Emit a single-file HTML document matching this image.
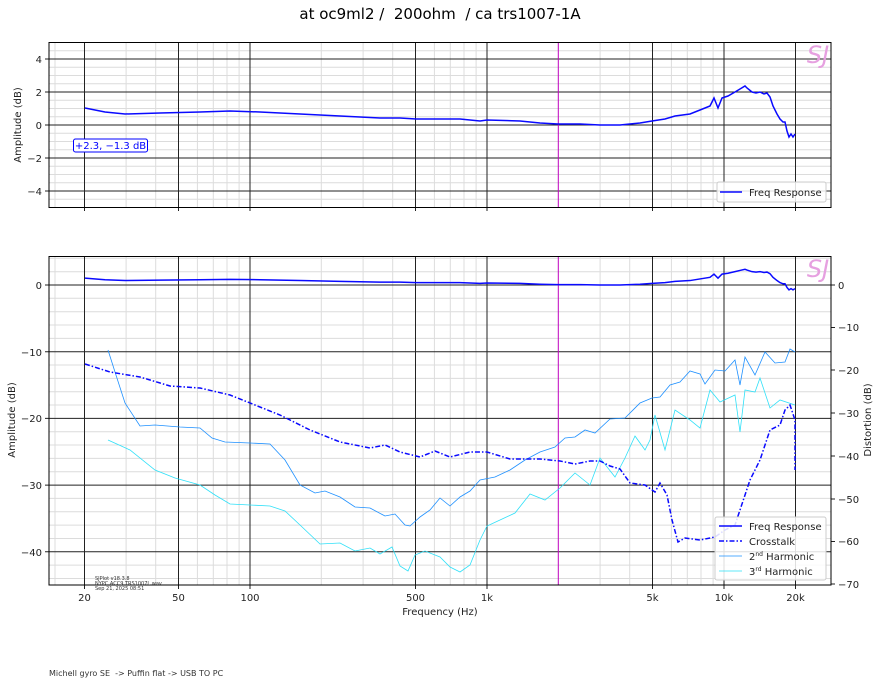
<!DOCTYPE html>
<html><head><meta charset="utf-8"><style>
html,body{margin:0;padding:0;background:#fff;}
svg{display:block;font-family:"DejaVu Sans","Liberation Sans",sans-serif;}
</style></head><body>
<svg width="879" height="685" viewBox="0 0 879 685" xmlns="http://www.w3.org/2000/svg">
<rect width="879" height="685" fill="#fff"/>
<text x="440" y="19" font-size="15" text-anchor="middle" fill="#000" style="white-space:pre">at oc9ml2 /  200ohm  / ca trs1007-1A</text>

<!-- TOP AXES -->
<g stroke="#dcdcdc" stroke-width="1">
<path d="M126.1 42V207M155.7 42V207M197.4 42V207M213.3 42V207M227 42V207M239.1 42V207M321.3 42V207M363.1 42V207M392.7 42V207M434.4 42V207M450.3 42V207M464 42V207M476.1 42V207M600.1 42V207M629.7 42V207M671.4 42V207M687.3 42V207M701 42V207M713.1 42V207M55 42V207"/>
<path d="M49 50.75H831M49 67.25H831M49 75.5H831M49 83.75H831M49 100.25H831M49 108.5H831M49 116.75H831M49 133.25H831M49 141.5H831M49 149.75H831M49 166.25H831M49 174.5H831M49 182.75H831M49 199.25H831"/>
</g>
<g stroke="#222" stroke-width="1">
<path d="M84.5 42V207M178.5 42V207M250 42V207M415.5 42V207M487 42V207M652.5 42V207M724 42V207M795.5 42V207"/>
<path d="M49 59H831M49 92H831M49 125H831M49 158H831M49 191H831"/>
<path d="M84.5 207v4M178.5 207v4M250 207v4M415.5 207v4M487 207v4M652.5 207v4M724 207v4M795.5 207v4M45 59h4M45 92h4M45 125h4M45 158h4M45 191h4"/>
</g>
<line x1="558.3" y1="42" x2="558.3" y2="207" stroke="#c000c0" stroke-width="1"/>
<rect x="49" y="42.5" width="782" height="165" fill="none" stroke="#000" stroke-width="1"/>
<g font-size="10" fill="#222" text-anchor="end">
<text x="42" y="63">4</text><text x="42" y="96">2</text><text x="42" y="129">0</text><text x="42" y="162">−2</text><text x="42" y="195">−4</text>
</g>
<text transform="translate(21 125) rotate(-90)" font-size="10" text-anchor="middle" fill="#222">Amplitude (dB)</text>
<text x="818" y="63" font-size="24" font-style="italic" fill="#e6a0e0" text-anchor="middle">SJ</text>
<rect x="73.5" y="139" width="74" height="13" rx="2" fill="#fff" stroke="#0000ff" stroke-width="1"/>
<text x="110.5" y="149" font-size="10" fill="#0000ff" text-anchor="middle">+2.3, −1.3 dB</text>

<path id="fr" fill="none" stroke="#0a0aff" stroke-width="1.5" vector-effect="non-scaling-stroke" d="M85 108L105 112L125 114L160 113L200 112L230 111L260 112L300 114L340 116L380 118L400 118L416 119L440 119L460 119L480 121L487 120L520 121L540 123L558 124L580 124L600 125L620 125L640 123L652 121L665 119L675 116L690 114L700 110L710 106L714 98L718 108L722 98L728 96L735 92L740 89L745 86L747 88L752 92L756 93L760 92L764 94L767 93L770 97L773 106L777 114L780 119L783 122L785 122L787 131L789 137L791 134L793 137L795 134"/>
<rect x="717" y="182" width="109" height="20" rx="2" fill="#fff" fill-opacity="0.85" stroke="#ccc"/>
<line x1="720" y1="192" x2="742" y2="192" stroke="#0a0aff" stroke-width="1.5"/>
<text x="749" y="196" font-size="10" fill="#222">Freq Response</text>

<!-- BOTTOM AXES -->
<g stroke="#dcdcdc" stroke-width="1">
<path d="M126.1 256V585M155.7 256V585M197.4 256V585M213.3 256V585M227 256V585M239.1 256V585M321.3 256V585M363.1 256V585M392.7 256V585M434.4 256V585M450.3 256V585M464 256V585M476.1 256V585M600.1 256V585M629.7 256V585M671.4 256V585M687.3 256V585M701 256V585M713.1 256V585M55 256V585"/>
<path d="M49 258.3H831M49 271.7H831M49 298.3H831M49 311.7H831M49 325H831M49 338.4H831M49 365H831M49 378.4H831M49 391.7H831M49 405H831M49 431.7H831M49 445H831M49 458.4H831M49 471.8H831M49 498.4H831M49 511.8H831M49 525.1H831M49 538.5H831M49 565.1H831M49 578.5H831"/>
</g>
<g stroke="#222" stroke-width="1">
<path d="M84.5 256V585M178.5 256V585M250 256V585M415.5 256V585M487 256V585M652.5 256V585M724 256V585M795.5 256V585"/>
<path d="M49 285H831M49 351.7H831M49 418.4H831M49 485.1H831M49 551.8H831"/>
<path d="M84.5 585v4M178.5 585v4M250 585v4M415.5 585v4M487 585v4M652.5 585v4M724 585v4M795.5 585v4M45 285h4M45 351.7h4M45 418.4h4M45 485.1h4M45 551.8h4"/>
<path d="M831 285h4M831 327.5h4M831 370h4M831 413h4M831 456h4M831 499h4M831 541.5h4M831 584h4"/>
</g>
<line x1="558.3" y1="256" x2="558.3" y2="585" stroke="#c000c0" stroke-width="1"/>
<rect x="49" y="256.5" width="782" height="328.5" fill="none" stroke="#000" stroke-width="1"/>
<g font-size="10" fill="#222" text-anchor="end">
<text x="42" y="289">0</text><text x="42" y="356">−10</text><text x="42" y="422">−20</text><text x="42" y="489">−30</text><text x="42" y="556">−40</text>
</g>
<g font-size="10" fill="#222" text-anchor="start">
<text x="838" y="289">0</text><text x="838" y="331">−10</text><text x="838" y="374">−20</text><text x="838" y="417">−30</text><text x="838" y="460">−40</text><text x="838" y="503">−50</text><text x="838" y="545">−60</text><text x="838" y="588">−70</text>
</g>
<g font-size="10" fill="#222" text-anchor="middle">
<text x="84.5" y="601">20</text><text x="178.5" y="601">50</text><text x="250" y="601">100</text><text x="415.5" y="601">500</text><text x="487" y="601">1k</text><text x="652.5" y="601">5k</text><text x="724" y="601">10k</text><text x="795.5" y="601">20k</text>
<text x="440" y="615">Frequency (Hz)</text>
</g>
<text transform="translate(15 420) rotate(-90)" font-size="10" text-anchor="middle" fill="#222">Amplitude (dB)</text>
<text transform="translate(871 420) rotate(-90)" font-size="10" text-anchor="middle" fill="#222">Distortion (dB)</text>
<text x="818" y="277" font-size="24" font-style="italic" fill="#e6a0e0" text-anchor="middle">SJ</text>

<use href="#fr" transform="matrix(1,0,0,0.404,0,234.5)"/>

<path fill="none" stroke="#1e90ff" stroke-width="0.8" d="M108 350L115 372L125 403L140 426L155 425L180 427L200 428L212 438L225 442L250 443L270 444L285 460L300 485L315 493L325 491L340 497L355 507L370 508L385 516L395 514L405 525L410 526L420 517L430 510L440 498L450 506L460 497L470 491L480 480L495 477L510 470L525 460L540 452L555 447L565 438L575 437L585 430L595 433L610 419L625 418L640 403L652 398L660 397L670 385L680 382L690 371L700 374L705 384L715 370L725 371L735 360L740 385L745 357L755 375L765 352L775 363L785 362L790 349L795 352"/>
<path fill="none" stroke="#2ee0f8" stroke-width="0.8" d="M108 440L130 450L155 470L175 478L200 485L215 495L230 504L250 505L270 506L285 511L300 525L320 544L340 543L355 551L370 548L380 554L392 547L400 566L408 571L415 555L425 551L440 557L450 567L460 572L470 565L480 540L487 526L500 520L515 513L530 494L545 500L560 488L575 473L590 485L600 458L615 477L625 458L635 436L645 450L650 440L655 415L665 450L675 410L690 420L700 428L710 390L720 402L735 395L740 432L745 390L755 392L760 378L770 408L780 400L795 405"/>
<path fill="none" stroke="#0a0aff" stroke-width="1.5" stroke-dasharray="5,2,1.5,2" d="M85 364L110 372L140 377L170 386L200 388L230 395L255 405L280 415L310 430L340 442L370 448L385 445L400 452L420 457L435 451L450 457L470 452L487 452L510 459L540 459L560 461L575 464L590 461L600 461L610 466L620 469L630 483L645 485L655 492L660 483L667 495L672 520L678 542L685 538L700 540L715 537L725 530L735 525L740 510L750 480L760 460L770 430L780 425L785 410L790 405L795 420L795 470"/>

<rect x="715" y="517" width="111" height="63" rx="2" fill="#fff" fill-opacity="0.85" stroke="#ccc"/>
<line x1="719" y1="526" x2="742" y2="526" stroke="#0a0aff" stroke-width="1.5"/>
<text x="749" y="530" font-size="10" fill="#222">Freq Response</text>
<line x1="719" y1="541" x2="742" y2="541" stroke="#0a0aff" stroke-width="1.5" stroke-dasharray="5,2,1.5,2"/>
<text x="749" y="545" font-size="10" fill="#222">Crosstalk</text>
<line x1="719" y1="556" x2="742" y2="556" stroke="#1e90ff" stroke-width="0.8"/>
<text x="749" y="560" font-size="10" fill="#222">2<tspan font-size="6" dy="-4">nd</tspan><tspan dy="4"> Harmonic</tspan></text>
<line x1="719" y1="571" x2="742" y2="571" stroke="#2ee0f8" stroke-width="0.8"/>
<text x="749" y="575" font-size="10" fill="#222">3<tspan font-size="6" dy="-4">rd</tspan><tspan dy="4"> Harmonic</tspan></text>

<g font-size="5" fill="#333">
<text x="95" y="580">SJPlot v18.3.8</text>
<text x="95" y="585">NYPC ACC9 TRS1007L.wav</text>
<text x="95" y="590">Sep 21, 2025 08:51</text>
</g>
<text x="49" y="676" font-size="8" fill="#333" style="white-space:pre">Michell gyro SE  -&gt; Puffin flat -&gt; USB TO PC</text>
</svg>
</body></html>
